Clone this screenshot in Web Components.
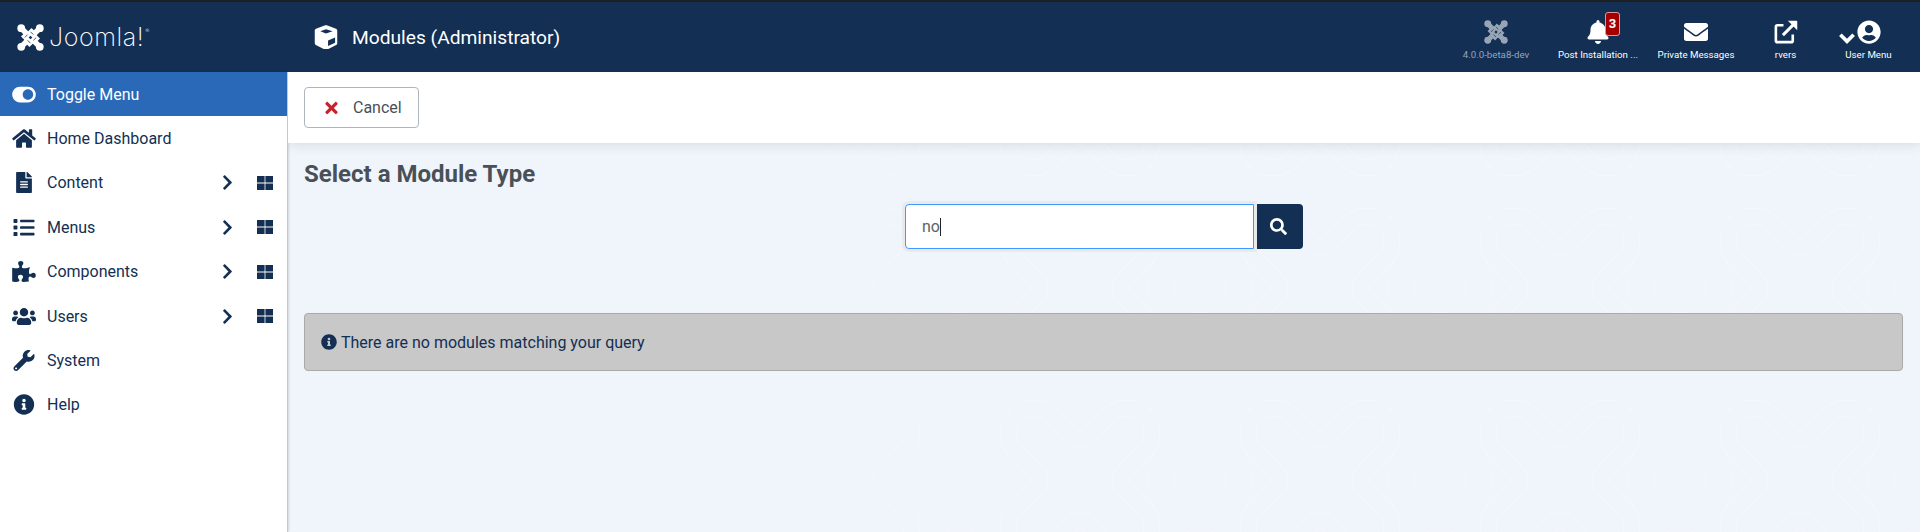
<!doctype html>
<html>
<head>
<meta charset="utf-8">
<title>Modules (Administrator)</title>
<style>
  html, body { margin: 0; height: 100%; overflow: hidden; }
  body { font-family: Roboto, "Liberation Sans", sans-serif; background: #132f53; }
</style>
</head>
<body>
<admin-page>
  <top-bar slot="top" heading="Modules (Administrator)">
    <status-item style="width:108px" label="4.0.0-beta8-dev" muted icon="joomla"></status-item>
    <status-item style="width:96px" label="Post Installation ..." icon="bell" badge="3"></status-item>
    <status-item style="width:100px" label="Private Messages" icon="mail"></status-item>
    <status-item style="width:79px" label="rvers" icon="external"></status-item>
    <status-item style="width:87px" label="User Menu" icon="user"></status-item>
  </top-bar>
  <side-menu slot="side">
    <menu-row label="Toggle Menu" icon="toggle" active></menu-row>
    <menu-row label="Home Dashboard" icon="home"></menu-row>
    <menu-row label="Content" icon="file" more></menu-row>
    <menu-row label="Menus" icon="list" more></menu-row>
    <menu-row label="Components" icon="puzzle" more></menu-row>
    <menu-row label="Users" icon="users" more></menu-row>
    <menu-row label="System" icon="wrench"></menu-row>
    <menu-row label="Help" icon="info"></menu-row>
  </side-menu>
  <module-select slot="main"></module-select>
</admin-page>

<script>
const ICONS = {
  joomla: `<svg viewBox="0 0 32 32" fill="currentColor"><circle cx="5" cy="5" r="4.600"/><circle cx="27" cy="5" r="4.600"/><circle cx="5" cy="27" r="4.600"/><circle cx="27" cy="27" r="4.600"/><g fill="none" stroke-linejoin="round" stroke-width="6.400" stroke="currentColor"><path d="M5 5L20 20l5-5"/><path d="M27 5L12 20l5 5"/><path d="M27 27L12 12l-5 5"/><path d="M5 27L20 12l-5-5"/></g><path d="M16 13.800l2.200 2.200-2.200 2.200-2.200-2.200z" fill="#132f53"/><path d="M9.200 16l3.400-3.400M22.800 16l-3.400 3.400M16 9.200l3.400 3.400M12.600 19.400L16 22.800" stroke="#132f53" stroke-width=".9" fill="none"/></svg>`,
  bell: `<svg viewBox="0 0 448 512" fill="currentColor"><path d="M224 512c35 0 64-29 64-64H160c0 35 29 64 64 64zm216-150c-19-21-56-52-56-154 0-78-54-140-128-155V32a32 32 0 1 0-64 0v21C118 68 64 130 64 208c0 102-37 133-56 154-6 6-8 13-8 22 0 16 13 32 32 32h384c19 0 32-16 32-32 0-9-2-16-8-22z"/></svg>`,
  mail: `<svg viewBox="0 0 512 512" fill="currentColor"><path d="M502 191c4-3 10 0 10 5v204c0 27-21 48-48 48H48c-27 0-48-21-48-48V196c0-5 6-8 10-5 22 17 52 39 154 113 21 15 57 48 92 48 35 0 72-33 92-48 102-74 132-96 154-113zM256 320c23 0 57-29 73-41 133-97 143-105 174-129 6-5 9-12 9-19v-19c0-27-21-48-48-48H48c-27 0-48 21-48 48v19c0 7 3 14 9 19 31 24 41 32 174 129 16 12 50 41 73 41z"/></svg>`,
  external: `<svg viewBox="0 0 512 512"><path d="M400 310v130a32 32 0 0 1-32 32H72a32 32 0 0 1-32-32V144a32 32 0 0 1 32-32h130" fill="none" stroke="currentColor" stroke-width="56"/><path d="M190 322L430 82" fill="none" stroke="currentColor" stroke-width="64"/><path d="M296 16h184a16 16 0 0 1 16 16v184z" fill="currentColor"/></svg>`,
  user: `<svg viewBox="0 0 496 512" fill="currentColor"><path d="M248 8C111 8 0 119 0 256s111 248 248 248 248-111 248-248S385 8 248 8zm0 96c49 0 88 39 88 88s-39 88-88 88-88-39-88-88 39-88 88-88zm0 344c-59 0-111-27-146-69 19-36 56-61 100-61 2 0 5 0 7 1 13 4 27 7 39 7s26-3 39-7c2-1 5-1 7-1 44 0 81 25 100 61-35 42-87 69-146 69z"/></svg>`,
  cube: `<svg viewBox="0 0 512 512" fill="currentColor" fill-rule="evenodd"><path d="M239 6L43 80c-16 6-27 22-27 39v272c0 16 9 30 23 37l196 98c13 6 29 6 42 0l196-98c14-7 23-21 23-37V119c0-17-11-33-27-39L273 6c-11-4-23-4-34 0zM256 88l141 47-141 48-121-48zM300 330l150-62v112l-150 70z"/></svg>`,
  toggle: `<svg viewBox="0 0 576 512" fill="currentColor"><path d="M384 64H192C86 64 0 150 0 256s86 192 192 192h192c106 0 192-86 192-192S490 64 384 64zm0 320c-71 0-128-57-128-128s57-128 128-128 128 57 128 128-57 128-128 128z"/></svg>`,
  home: `<svg viewBox="0 0 576 512" fill="currentColor"><path d="M280 148L96 300v164c0 9 7 16 16 16l112-.3c9 0 16-7 16-16V368c0-9 7-16 16-16h64c9 0 16 7 16 16v96c0 9 7 16 16 16l112 .3c9 0 16-7 16-16V300L296 148c-4-4-11-4-16 0zM572 251l-84-69V44c0-7-5-12-12-12h-56c-7 0-12 5-12 12v72l-90-74c-18-15-43-15-61 0L4 251c-5 4-6 12-2 17l26 31c4 5 12 6 17 2L280 107c4-4 11-4 16 0l235 194c5 4 13 3 17-2l26-31c4-5 3-13-2-17z"/></svg>`,
  file: `<svg viewBox="0 0 384 512" fill="currentColor"><path d="M224 136V0H24C11 0 0 11 0 24v464c0 13 11 24 24 24h336c13 0 24-11 24-24V160H248c-13 0-24-11-24-24zm64 236c0 7-5 12-12 12H108c-7 0-12-5-12-12v-8c0-7 5-12 12-12h168c7 0 12 5 12 12zm0-64c0 7-5 12-12 12H108c-7 0-12-5-12-12v-8c0-7 5-12 12-12h168c7 0 12 5 12 12zm0-72v8c0 7-5 12-12 12H108c-7 0-12-5-12-12v-8c0-7 5-12 12-12h168c7 0 12 5 12 12zm96-114v6H256V0h6c6 0 12 3 17 7l98 98c4 5 7 11 7 17z"/></svg>`,
  list: `<svg viewBox="0 0 512 512" fill="currentColor"><path d="M80 368H16a16 16 0 0 0-16 16v64a16 16 0 0 0 16 16h64a16 16 0 0 0 16-16v-64a16 16 0 0 0-16-16zm0-320H16A16 16 0 0 0 0 64v64a16 16 0 0 0 16 16h64a16 16 0 0 0 16-16V64a16 16 0 0 0-16-16zm0 160H16a16 16 0 0 0-16 16v64a16 16 0 0 0 16 16h64a16 16 0 0 0 16-16v-64a16 16 0 0 0-16-16zm416 176H176a16 16 0 0 0-16 16v32a16 16 0 0 0 16 16h320a16 16 0 0 0 16-16v-32a16 16 0 0 0-16-16zm0-320H176a16 16 0 0 0-16 16v32a16 16 0 0 0 16 16h320a16 16 0 0 0 16-16V80a16 16 0 0 0-16-16zm0 160H176a16 16 0 0 0-16 16v32a16 16 0 0 0 16 16h320a16 16 0 0 0 16-16v-32a16 16 0 0 0-16-16z"/></svg>`,
  puzzle: `<svg viewBox="0 0 576 512" fill="currentColor"><path d="M519.442 288.651c-41.519 0-59.5 31.593-82.058 31.593C377.409 320.244 432 144 432 144s-196.288 80-196.288-3.297c0-35.827 36.288-46.25 36.288-85.985C272 19.216 243.885 0 210.539 0c-34.654 0-66.366 18.891-66.366 56.346 0 41.364 31.711 59.277 31.711 81.750C175.885 207.719 0 166.758 0 166.758v333.237s178.635 41.047 178.635-28.662c0-22.473-40-40.107-40-81.471 0-37.456 29.250-56.346 63.577-56.346 33.673 0 61.788 19.216 61.788 54.717 0 39.735-36.288 50.158-36.288 85.985 0 60.803 129.675 25.730 181.230 25.730 0 0-34.725-120.101 25.827-120.101 35.962 0 46.423 36.152 86.308 36.152C556.712 416 576 387.990 576 354.443c0-34.199-18.962-65.792-56.558-65.792z"/></svg>`,
  users: `<svg viewBox="0 0 640 512" fill="currentColor"><path d="M96 224c35 0 64-29 64-64s-29-64-64-64-64 29-64 64 29 64 64 64zm448 0c35 0 64-29 64-64s-29-64-64-64-64 29-64 64 29 64 64 64zm32 32h-64c-18 0-34 7-45 19 40 22 69 62 75 109h66c18 0 32-14 32-32v-32c0-35-29-64-64-64zm-256 0c62 0 112-50 112-112S382 32 320 32 208 82 208 144s50 112 112 112zm77 32h-8c-21 10-44 16-69 16s-48-6-69-16h-8c-64 0-115 52-115 115v29c0 27 21 48 48 48h288c27 0 48-21 48-48v-29c0-63-52-115-115-115zm-224-13c-11-12-27-19-45-19H64c-35 0-64 29-64 64v32c0 18 14 32 32 32h66c6-47 35-87 75-109z"/></svg>`,
  wrench: `<svg viewBox="0 0 512 512" fill="currentColor"><path d="M507.730 109.100c-2.240-9.030-13.540-12.090-20.120-5.510l-74.360 74.360-67.880-11.310-11.310-67.880 74.360-74.360c6.620-6.620 3.430-17.900-5.660-20.160-47.380-11.740-99.550.91-136.580 37.930-39.640 39.640-50.550 97.100-34.050 147.200L18.740 402.760c-24.990 24.990-24.990 65.510 0 90.500 24.990 24.990 65.510 24.990 90.500 0l213.210-213.210c50.120 16.710 107.470 5.680 147.370-34.220 37.070-37.070 49.700-89.320 37.910-136.730zM64 472c-13.250 0-24-10.750-24-24 0-13.260 10.750-24 24-24s24 10.740 24 24c0 13.250-10.750 24-24 24z"/></svg>`,
  info: `<svg viewBox="0 0 512 512" fill="currentColor"><path d="M256 8C119 8 8 119 8 256s111 248 248 248 248-111 248-248S393 8 256 8zm0 110c23 0 42 19 42 42s-19 42-42 42-42-19-42-42 19-42 42-42zm56 254c0 7-5 12-12 12h-88c-7 0-12-5-12-12v-24c0-7 5-12 12-12h12v-64h-12c-7 0-12-5-12-12v-24c0-7 5-12 12-12h64c7 0 12 5 12 12v100h12c7 0 12 5 12 12z"/></svg>`,
  search: `<svg viewBox="0 0 512 512" fill="currentColor"><path d="M505 442.700L405.300 343c-4.500-4.500-10.600-7-17-7H372c27.600-35.300 44-79.700 44-128C416 93.100 322.900 0 208 0S0 93.100 0 208s93.100 208 208 208c48.300 0 92.700-16.400 128-44v16.300c0 6.400 2.500 12.500 7 17l99.700 99.700c9.400 9.400 24.600 9.400 33.900 0l28.300-28.300c9.400-9.400 9.400-24.600.1-34zM208 336c-70.700 0-128-57.200-128-128 0-70.700 57.200-128 128-128 70.700 0 128 57.200 128 128 0 70.700-57.200 128-128 128z"/></svg>`,
  times: `<svg viewBox="0 0 352 512" fill="currentColor"><path d="M242.700 256l100-100c12.300-12.300 12.300-32.200 0-44.500l-22.200-22.200c-12.300-12.300-32.200-12.300-44.500 0L176 189.300 76 89.200c-12.300-12.300-32.200-12.300-44.500 0L9.300 111.500c-12.300 12.300-12.300 32.200 0 44.500l100 100-100 100c-12.300 12.300-12.300 32.200 0 44.500l22.200 22.200c12.300 12.300 32.200 12.300 44.500 0l100-100 100 100c12.300 12.300 32.200 12.300 44.500 0l22.200-22.200c12.300-12.300 12.300-32.200 0-44.500z"/></svg>`,
  chevron: `<svg viewBox="0 0 320 512" fill="currentColor"><path d="M285.500 273L91.100 467.300c-9.400 9.400-24.600 9.400-33.900 0l-22.700-22.700c-9.400-9.400-9.400-24.500 0-33.900L188.500 256 34.500 101.300c-9.300-9.400-9.300-24.500 0-33.900l22.700-22.700c9.400-9.400 24.600-9.400 33.900 0L285.500 239c9.400 9.400 9.400 24.600 0 34z"/></svg>`,
  grid: `<svg viewBox="0 0 16 14" fill="currentColor"><path d="M0 0h7.600v6.600H0zM8.400 0H16v6.600H8.400zM0 7.400h7.600V14H0zM8.400 7.400H16V14H8.400z"/></svg>`,
  caret: `<svg viewBox="0 0 448 512" fill="none" stroke="currentColor" stroke-width="105"><path d="M36 165l188 188 188-188"/></svg>`
};

class AdminPage extends HTMLElement {
  constructor() {
    super();
    this.attachShadow({ mode: "open" }).innerHTML = `
    <style>
      :host { display: grid; grid-template: 70px 1fr / 288px 1fr; height: 100vh; box-sizing: border-box; border-top: 2px solid #1c1f24; }
      ::slotted([slot=top]) { grid-column: 1 / -1; }
    </style>
    <slot name="top"></slot><slot name="side"></slot><slot name="main"></slot>`;
  }
}

class TopBar extends HTMLElement {
  constructor() {
    super();
    this.attachShadow({ mode: "open" });
  }
  connectedCallback() {
    this.shadowRoot.innerHTML = `
    <style>
      :host { display: flex; align-items: center; height: 70px; background: #132f53; color: #fff; }
      .brand { width: 288px; padding-left: 17px; box-sizing: border-box; display: flex; align-items: center; gap: 5px; font: 200 25px/1 Inter, sans-serif; flex: none; letter-spacing: .6px; }
      .brand svg { width: 27px; height: 27px; }
      .brand sup { font-size: 6px; align-self: flex-start; margin: 4px 0 0 -4px; }
      .title { flex: 1; display: flex; align-items: center; gap: 14px; padding-left: 26px; font-size: 19.2px; }
      .title svg { width: 24px; height: 24px; }
      .items { display: flex; align-items: flex-start; padding-right: 8px; align-self: flex-start; padding-top: 17px; }
    </style>
    <div class="brand">${ICONS.joomla}<span>Joomla!</span><sup>®</sup></div>
    <div class="title">${ICONS.cube}<span>${this.getAttribute("heading")}</span></div>
    <div class="items"><slot></slot></div>`;
  }
}

class StatusItem extends HTMLElement {
  constructor() {
    super();
    this.attachShadow({ mode: "open" });
  }
  connectedCallback() {
    const icon = this.getAttribute("icon");
    const badge = this.getAttribute("badge");
    const caret = icon === "user" ? `<span class="caret">${ICONS.caret}</span>` : "";
    this.shadowRoot.innerHTML = `
    <style>
      :host { display: flex; flex-direction: column; align-items: center; color: #fff; }
      :host([muted]) { color: #98a5b6; }
      .ico { position: relative; height: 26px; display: flex; align-items: center; margin-bottom: 3px; }
      .ico > svg { height: 24px; width: 24px; }
      .caret { position: absolute; left: -18px; top: 10px; }
      .caret svg { width: 16px; height: 18px; display: block; }
      .badge { position: absolute; left: 19px; top: -7px; width: 15px; height: 24px; box-sizing: border-box; border: 1px solid #d99; border-radius: 3px; background: #a50000; color: #fff; font: 700 13px/22px Roboto, sans-serif; text-align: center; }
      .label { font-size: 9.7px; line-height: 13px; white-space: nowrap; }
    </style>
    <div class="ico">${caret}${ICONS[icon]}${badge ? `<span class="badge">${badge}</span>` : ""}</div>
    <div class="label">${this.getAttribute("label")}</div>`;
  }
}

class SideMenu extends HTMLElement {
  constructor() {
    super();
    this.attachShadow({ mode: "open" }).innerHTML = `
    <style>
      :host { display: block; background: #fff; border-right: 1px solid #c5c9cf; box-shadow: 1px 0 2px rgba(0,0,0,.12); position: relative; box-sizing: border-box; }
    </style>
    <slot></slot>`;
  }
}

class MenuRow extends HTMLElement {
  constructor() {
    super();
    this.attachShadow({ mode: "open" });
  }
  connectedCallback() {
    const more = this.hasAttribute("more") ? `<span class="chev">${ICONS.chevron}</span><span class="grid">${ICONS.grid}</span>` : "";
    this.shadowRoot.innerHTML = `
    <style>
      :host { display: flex; align-items: center; height: 44.4px; color: #132f53; font-size: 16px; }
      :host([active]) { background: #2a69b8; color: #fff; }
      .ico { width: 47px; flex: none; display: flex; justify-content: center; box-sizing: border-box; }
      .ico svg { height: 21px; width: 24px; display: block; }
      .name { flex: 1; }
      .chev svg { display: block; width: 11px; height: 17px; }
      .grid { margin: 0 14px 0 24px; }
      .grid svg { display: block; width: 16px; height: 14px; }
    </style>
    <span class="ico">${ICONS[this.getAttribute("icon")]}</span>
    <span class="name">${this.getAttribute("label")}</span>${more}`;
  }
}

class ModuleSelect extends HTMLElement {
  constructor() {
    super();
    this.attachShadow({ mode: "open" });
  }
  connectedCallback() {
    // one logo-like loop per 240x192 tile, drawn twice so only its two edges show
    const loop = "M-10-45.4Q0-35.4 10-45.4L29.3-64.7A25 25 0 0 1 64.7-29.3L45.4-10Q35.4 0 45.4 10L64.7 29.3A25 25 0 0 1 29.3 64.7L10 45.4Q0 35.4-10 45.4L-29.3 64.7A25 25 0 0 1-64.7 29.3L-45.4 10Q-35.4 0-45.4-10L-64.7-29.3A25 25 0 0 1-29.3-64.7Z";
    const art = `<svg xmlns='http://www.w3.org/2000/svg' width='240' height='192' fill='none'><rect width='240' height='192' fill='#f0f4fb'/><g stroke='#f5f7fb'><circle cx='0' cy='96' r='53'/><circle cx='240' cy='96' r='53'/><circle cx='0' cy='96' r='25'/><circle cx='240' cy='96' r='25'/><path d='M0 32V70M0 122V160M240 32V70M240 122V160'/></g><g transform='translate(120 96)'><path d='${loop}' stroke='#f6f8fb' stroke-width='17'/><path d='${loop}' stroke='#f0f4fb' stroke-width='15'/></g></svg>`;
    this.shadowRoot.innerHTML = `
    <style>
      :host { display: flex; flex-direction: column; min-width: 0; background-color: #f0f4fb; background-image: linear-gradient(90deg, #f0f4fb 300px, rgba(240,244,251,0) 800px), url("data:image/svg+xml,${encodeURIComponent(art)}"); background-position: 0 0, 192px 120px; overflow: hidden; }
      .toolbar { height: 71px; flex: none; background: #fff; display: flex; align-items: center; padding: 0 16px; box-shadow: 0 2px 12px rgba(0,0,0,.1); position: relative; }
      .cancel { display: flex; align-items: center; gap: 15px; height: 41px; width: 115px; box-sizing: border-box; padding-left: 20px; border: 1px solid #adb5bd; border-radius: 4px; background: #fff; color: #495057; font: 400 16px Roboto, sans-serif; }
      .cancel svg { width: 13px; height: 18px; color: #c8232c; }
      .body { padding: 17px 16px 0; display: flex; flex-direction: column; }
      h1 { margin: 0; font-size: 24px; line-height: 29px; font-weight: 700; color: #495057; }
      .search { display: flex; align-self: center; margin: 15px 0 0; }
      .field { width: 349px; height: 45px; box-sizing: border-box; border: 1px solid #3d9bff; border-radius: 4px 0 0 4px; background: #fff; box-shadow: 0 0 0 3px #e8eaee; padding-left: 16px; display: flex; align-items: center; color: #5d6268; font-size: 16px; }
      .caret { width: 1px; height: 18px; background: #222; }
      .go { width: 46px; height: 45px; margin-left: 3px; border: 0; padding: 0 4px 0 0; border-radius: 0 4px 4px 0; background: #132f53; color: #fff; display: flex; align-items: center; justify-content: center; position: relative; }
      .go svg { width: 17px; height: 17px; }
      .alert { margin-top: 64px; height: 58px; box-sizing: border-box; margin-right: 1px; border: 1px solid #aaa; border-radius: 4px; background: #c8c8c8; color: #132f53; display: flex; align-items: center; gap: 4px; padding-left: 16px; font-size: 16px; }
      .alert svg { width: 16px; height: 16px; }
    </style>
    <div class="toolbar"><button class="cancel">${ICONS.times}<span>Cancel</span></button></div>
    <div class="body">
      <h1>Select a Module Type</h1>
      <div class="search">
        <div class="field"><span>no</span><i class="caret"></i></div>
        <button class="go" aria-label="Search">${ICONS.search}</button>
      </div>
      <div class="alert">${ICONS.info}<span>There are no modules matching your query</span></div>
    </div>`;
  }
}

customElements.define("admin-page", AdminPage);
customElements.define("top-bar", TopBar);
customElements.define("status-item", StatusItem);
customElements.define("side-menu", SideMenu);
customElements.define("menu-row", MenuRow);
customElements.define("module-select", ModuleSelect);
</script>
</body>
</html>
